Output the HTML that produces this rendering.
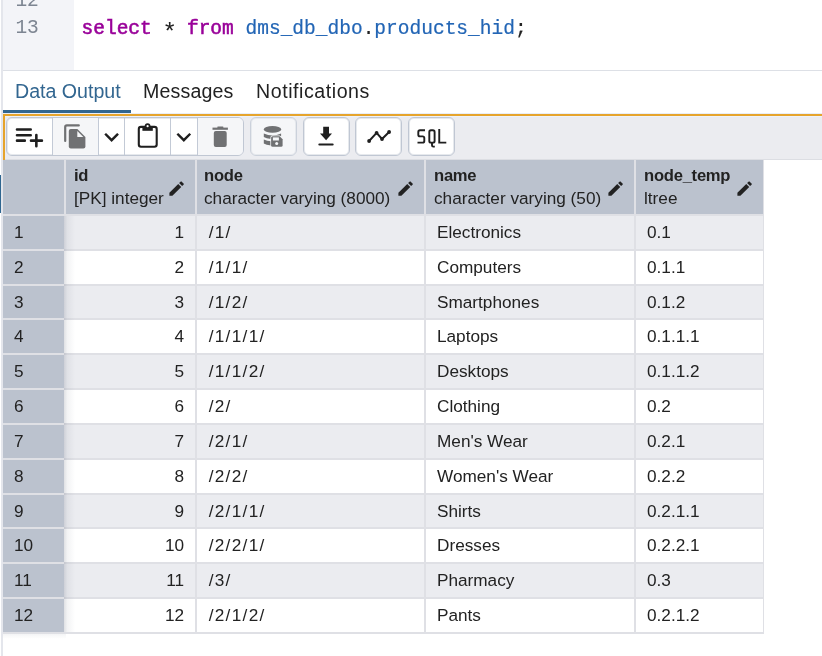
<!DOCTYPE html>
<html><head><meta charset="utf-8">
<style>
*{box-sizing:border-box;margin:0;padding:0}
html,body{width:822px;height:656px;overflow:hidden;background:#fff;font-family:"Liberation Sans",sans-serif;color:#222}
.a{position:absolute}
.ln{font-family:"Liberation Mono",monospace;font-size:19.5px;color:#7d8592;left:15.4px;line-height:27px;white-space:pre}
.code{font-family:"Liberation Mono",monospace;font-size:19.53px;left:81.5px;top:15.5px;line-height:27px;white-space:pre;color:#222;-webkit-text-stroke:0.2px}
.ast{display:inline-block;width:11.72px;font-size:24px;line-height:10px;position:relative;top:6.5px;left:-1.1px;-webkit-text-stroke:0.1px}
.kw{color:#990099;-webkit-text-stroke:0.55px}
.idf{color:#2265b5}
.tab{top:80px;font-size:19.6px;line-height:22px;white-space:pre}
.btn{position:absolute;top:117px;height:39px;border:1px solid #c3cad6;background:#fff}
.dis{background:#f4f5f8}
.t{position:absolute;font-size:17.2px;line-height:20px;white-space:pre;color:#222}
.b{font-weight:bold;font-size:16.6px;letter-spacing:-0.25px}
</style></head><body>
<div style="position:absolute;left:0;top:0;width:822px;height:656px;will-change:transform">
<div class="a" style="left:1px;top:0;width:2px;height:656px;background:#e4e6ec"></div>
<div class="a" style="left:0;top:175px;width:1px;height:38px;background:#2f6690"></div>
<div class="a" style="left:3px;top:0;width:71px;height:70px;background:#f3f4f8"></div>
<div class="a ln" style="top:-12.5px">12</div>
<div class="a ln" style="top:14.5px">13</div>
<div class="a code"><span class="kw">select</span> <span class="ast">*</span> <span class="kw">from</span> <span class="idf">dms_db_dbo</span>.<span class="idf">products_hid</span>;</div>
<div class="a" style="left:3px;top:70px;width:819px;height:1px;background:#dde0e6"></div>
<div class="a tab" style="left:15px;color:#326690">Data Output</div>
<div class="a tab" style="left:143px;letter-spacing:0.15px">Messages</div>
<div class="a tab" style="left:256px;letter-spacing:0.55px">Notifications</div>
<div class="a" style="left:3px;top:110px;width:128px;height:3px;background:#326690"></div>
<div class="a" style="left:3px;top:113px;width:819px;height:1px;background:#e9eef7"></div>
<div class="a" style="left:3px;top:114px;width:819px;height:46px;background:#ebecf0;border-top:2px solid #e6a42c;border-left:2px solid #e6a42c"></div>
<div class="a" style="left:5px;top:116px;width:817px;height:1px;background:#eef2f9"></div>
<div class="a" style="left:5px;top:159px;width:817px;height:1px;background:#dcdee3"></div>
<div class="a" style="left:6px;top:117px;width:238px;height:39px;border:1px solid #c0c7d3;border-radius:6px;background:#fff;overflow:hidden;box-shadow:inset 0 0 0 1px rgba(192,199,211,0.4)"><div class="a" style="left:46px;top:0;width:45px;height:37px;background:#f5f6f8"></div><div class="a" style="left:191px;top:0;width:46px;height:37px;background:#f5f6f8"></div><div class="a" style="left:45px;top:0;width:1px;height:37px;background:#c3cad6"></div><div class="a" style="left:91px;top:0;width:1px;height:37px;background:#c3cad6"></div><div class="a" style="left:117px;top:0;width:1px;height:37px;background:#c3cad6"></div><div class="a" style="left:163px;top:0;width:1px;height:37px;background:#c3cad6"></div><div class="a" style="left:190px;top:0;width:1px;height:37px;background:#c3cad6"></div></div>
<div class="a" style="left:250px;top:117px;width:47px;height:39px;border:1px solid #cbd1db;border-radius:6px;background:#f5f6f8;box-shadow:inset 0 0 0 1px rgba(203,209,219,0.35)"></div>
<div class="a" style="left:303px;top:117px;width:47px;height:39px;border:1px solid #c0c7d3;border-radius:6px;background:#fff;box-shadow:inset 0 0 0 1px rgba(192,199,211,0.4)"></div>
<div class="a" style="left:355px;top:117px;width:47px;height:39px;border:1px solid #c0c7d3;border-radius:6px;background:#fff;box-shadow:inset 0 0 0 1px rgba(192,199,211,0.4)"></div>
<div class="a" style="left:408px;top:117px;width:47px;height:39px;border:1px solid #c0c7d3;border-radius:6px;background:#fff;box-shadow:inset 0 0 0 1px rgba(192,199,211,0.4)"></div>
<svg class="a" style="left:0;top:0" width="822" height="656" viewBox="0 0 822 656">
<g stroke="#1f1f1f" stroke-width="2.6" stroke-linecap="round" fill="none">
<path d="M17 129.5H30.7M17 135.2H30.7M17 140.65H24.8M31 140.65H41.9M36.35 135.1V146.3"/>
</g>
<path d="M65.2 141V127Q65.2 125.4 66.8 125.4H78.8" stroke="#707173" stroke-width="2.2" stroke-linecap="round" fill="none"/>
<path d="M70.8 128.9H77.4L85.4 136.9V146.6Q85.4 148.6 83.4 148.6H70.8Q68.8 148.6 68.8 146.6V130.9Q68.8 128.9 70.8 128.9Z" fill="#707173"/>
<path d="M77.3 131.1V137.1H83.3Z" fill="#f5f6f8"/>
<path d="M106 134.6L111.6 140.2L117.2 134.6M178.2 134.6L183.8 140.2L189.4 134.6" stroke="#1f1f1f" stroke-width="2.4" fill="none" stroke-linecap="square"/>
<rect x="138.8" y="126.9" width="17.9" height="19.8" rx="2.2" stroke="#1f1f1f" stroke-width="2.1" fill="none"/>
<rect x="142.4" y="126.5" width="10.4" height="4.3" fill="#1f1f1f"/>
<circle cx="147.6" cy="126.1" r="2.9" fill="#1f1f1f"/>
<circle cx="147.6" cy="126.2" r="1.1" fill="#fff"/>
<rect x="212.5" y="127.6" width="15.4" height="2.2" fill="#707173"/>
<rect x="217.2" y="126.5" width="6.3" height="1.6" rx="0.8" fill="#707173"/>
<rect x="213.8" y="131" width="12.9" height="16.1" rx="2" fill="#707173"/>
<ellipse cx="272.5" cy="129.4" rx="8.7" ry="3.3" fill="#707173"/>
<path d="M263.8 133.6Q272.5 137.4 281.1 133.6V136.3H271.1V138.9Q266 138.5 263.8 137Z" fill="#707173"/>
<path d="M263.8 139.6Q267 141 271.1 141.3V145.6Q266 145.2 263.8 143.6Z" fill="#707173"/>
<path d="M272.6 136.3H279.6L282.6 139.3V145.3Q282.6 146.8 281.1 146.8H272.6Q271.1 146.8 271.1 145.3V137.8Q271.1 136.3 272.6 136.3Z" fill="#707173" stroke="#f5f6f8" stroke-width="1.5" paint-order="stroke"/>
<rect x="272.9" y="137.4" width="6" height="3.1" fill="#f5f6f8"/>
<circle cx="276.7" cy="143.6" r="1.5" fill="#f5f6f8"/>
<path d="M323.2 126.8H329V133.4H332L326.1 140.2L320 133.4H323.2Z" fill="#1f1f1f"/>
<path d="M319.4 144.5H332.6" stroke="#1f1f1f" stroke-width="2.2" stroke-linecap="round"/>
<path d="M369.1 141L376.6 132.9L382 139L389.1 132" stroke="#1f1f1f" stroke-width="2" fill="none"/>
<circle cx="369.1" cy="141" r="1.9" fill="#1f1f1f"/><circle cx="376.6" cy="132.9" r="1.9" fill="#1f1f1f"/><circle cx="382" cy="139" r="1.9" fill="#1f1f1f"/><circle cx="389.1" cy="132" r="1.9" fill="#1f1f1f"/>
<g stroke="#1f1f1f" stroke-width="1.9" fill="none">
<path d="M425 130.2H420Q418.3 130.2 418.3 132V134.7Q418.3 136.4 420 136.4H422.6Q424.3 136.4 424.3 138.1V140.9Q424.3 142.6 422.6 142.6H417.5"/>
<path d="M431 130.2H432.9Q434.6 130.2 434.6 132V140.9Q434.6 142.6 432.9 142.6H431Q429.3 142.6 429.3 140.9V132Q429.3 130.2 431 130.2Z"/>
<path d="M432 142.6V145.3Q432 146.6 433.3 146.6H434.8"/>
<path d="M439.25 129.1V142.6H446.3"/>
</g>
</svg>
<div class="a" style="left:3px;top:160px;width:760px;height:54px;background:#bbc2ce"></div>
<div class="a" style="left:3px;top:214px;width:760px;height:2px;background:#dfe0e5"></div>
<div class="a" style="left:64px;top:216px;width:699px;height:33px;background:#ebecf0"></div>
<div class="a" style="left:3px;top:216px;width:61px;height:33px;background:#bbc2ce"></div>
<div class="t" style="left:14px;top:222.0px">1</div>
<div class="t" style="right:638px;top:222.0px">1</div>
<div class="t" style="left:208.7px;top:222.0px;letter-spacing:1.3px">/1/</div>
<div class="t" style="left:437px;top:222.0px">Electronics</div>
<div class="t" style="left:647px;top:222.0px">0.1</div>
<div class="a" style="left:3px;top:249px;width:760px;height:2px;background:#dfe0e5"></div>
<div class="a" style="left:64px;top:251px;width:699px;height:33px;background:#fff"></div>
<div class="a" style="left:3px;top:251px;width:61px;height:33px;background:#bbc2ce"></div>
<div class="t" style="left:14px;top:257.0px">2</div>
<div class="t" style="right:638px;top:257.0px">2</div>
<div class="t" style="left:208.7px;top:257.0px;letter-spacing:1.3px">/1/1/</div>
<div class="t" style="left:437px;top:257.0px">Computers</div>
<div class="t" style="left:647px;top:257.0px">0.1.1</div>
<div class="a" style="left:3px;top:284px;width:760px;height:2px;background:#dfe0e5"></div>
<div class="a" style="left:64px;top:286px;width:699px;height:32px;background:#ebecf0"></div>
<div class="a" style="left:3px;top:286px;width:61px;height:32px;background:#bbc2ce"></div>
<div class="t" style="left:14px;top:291.5px">3</div>
<div class="t" style="right:638px;top:291.5px">3</div>
<div class="t" style="left:208.7px;top:291.5px;letter-spacing:1.3px">/1/2/</div>
<div class="t" style="left:437px;top:291.5px">Smartphones</div>
<div class="t" style="left:647px;top:291.5px">0.1.2</div>
<div class="a" style="left:3px;top:318px;width:760px;height:2px;background:#dfe0e5"></div>
<div class="a" style="left:64px;top:320px;width:699px;height:33px;background:#fff"></div>
<div class="a" style="left:3px;top:320px;width:61px;height:33px;background:#bbc2ce"></div>
<div class="t" style="left:14px;top:326.0px">4</div>
<div class="t" style="right:638px;top:326.0px">4</div>
<div class="t" style="left:208.7px;top:326.0px;letter-spacing:1.3px">/1/1/1/</div>
<div class="t" style="left:437px;top:326.0px">Laptops</div>
<div class="t" style="left:647px;top:326.0px">0.1.1.1</div>
<div class="a" style="left:3px;top:353px;width:760px;height:2px;background:#dfe0e5"></div>
<div class="a" style="left:64px;top:355px;width:699px;height:33px;background:#ebecf0"></div>
<div class="a" style="left:3px;top:355px;width:61px;height:33px;background:#bbc2ce"></div>
<div class="t" style="left:14px;top:361.0px">5</div>
<div class="t" style="right:638px;top:361.0px">5</div>
<div class="t" style="left:208.7px;top:361.0px;letter-spacing:1.3px">/1/1/2/</div>
<div class="t" style="left:437px;top:361.0px">Desktops</div>
<div class="t" style="left:647px;top:361.0px">0.1.1.2</div>
<div class="a" style="left:3px;top:388px;width:760px;height:2px;background:#dfe0e5"></div>
<div class="a" style="left:64px;top:390px;width:699px;height:33px;background:#fff"></div>
<div class="a" style="left:3px;top:390px;width:61px;height:33px;background:#bbc2ce"></div>
<div class="t" style="left:14px;top:396.0px">6</div>
<div class="t" style="right:638px;top:396.0px">6</div>
<div class="t" style="left:208.7px;top:396.0px;letter-spacing:1.3px">/2/</div>
<div class="t" style="left:437px;top:396.0px">Clothing</div>
<div class="t" style="left:647px;top:396.0px">0.2</div>
<div class="a" style="left:3px;top:423px;width:760px;height:2px;background:#dfe0e5"></div>
<div class="a" style="left:64px;top:425px;width:699px;height:33px;background:#ebecf0"></div>
<div class="a" style="left:3px;top:425px;width:61px;height:33px;background:#bbc2ce"></div>
<div class="t" style="left:14px;top:431.0px">7</div>
<div class="t" style="right:638px;top:431.0px">7</div>
<div class="t" style="left:208.7px;top:431.0px;letter-spacing:1.3px">/2/1/</div>
<div class="t" style="left:437px;top:431.0px">Men's Wear</div>
<div class="t" style="left:647px;top:431.0px">0.2.1</div>
<div class="a" style="left:3px;top:458px;width:760px;height:2px;background:#dfe0e5"></div>
<div class="a" style="left:64px;top:460px;width:699px;height:33px;background:#fff"></div>
<div class="a" style="left:3px;top:460px;width:61px;height:33px;background:#bbc2ce"></div>
<div class="t" style="left:14px;top:466.0px">8</div>
<div class="t" style="right:638px;top:466.0px">8</div>
<div class="t" style="left:208.7px;top:466.0px;letter-spacing:1.3px">/2/2/</div>
<div class="t" style="left:437px;top:466.0px">Women's Wear</div>
<div class="t" style="left:647px;top:466.0px">0.2.2</div>
<div class="a" style="left:3px;top:493px;width:760px;height:2px;background:#dfe0e5"></div>
<div class="a" style="left:64px;top:495px;width:699px;height:32px;background:#ebecf0"></div>
<div class="a" style="left:3px;top:495px;width:61px;height:32px;background:#bbc2ce"></div>
<div class="t" style="left:14px;top:500.5px">9</div>
<div class="t" style="right:638px;top:500.5px">9</div>
<div class="t" style="left:208.7px;top:500.5px;letter-spacing:1.3px">/2/1/1/</div>
<div class="t" style="left:437px;top:500.5px">Shirts</div>
<div class="t" style="left:647px;top:500.5px">0.2.1.1</div>
<div class="a" style="left:3px;top:527px;width:760px;height:2px;background:#dfe0e5"></div>
<div class="a" style="left:64px;top:529px;width:699px;height:33px;background:#fff"></div>
<div class="a" style="left:3px;top:529px;width:61px;height:33px;background:#bbc2ce"></div>
<div class="t" style="left:14px;top:535.0px">10</div>
<div class="t" style="right:638px;top:535.0px">10</div>
<div class="t" style="left:208.7px;top:535.0px;letter-spacing:1.3px">/2/2/1/</div>
<div class="t" style="left:437px;top:535.0px">Dresses</div>
<div class="t" style="left:647px;top:535.0px">0.2.2.1</div>
<div class="a" style="left:3px;top:562px;width:760px;height:2px;background:#dfe0e5"></div>
<div class="a" style="left:64px;top:564px;width:699px;height:33px;background:#ebecf0"></div>
<div class="a" style="left:3px;top:564px;width:61px;height:33px;background:#bbc2ce"></div>
<div class="t" style="left:14px;top:570.0px">11</div>
<div class="t" style="right:638px;top:570.0px">11</div>
<div class="t" style="left:208.7px;top:570.0px;letter-spacing:1.3px">/3/</div>
<div class="t" style="left:437px;top:570.0px">Pharmacy</div>
<div class="t" style="left:647px;top:570.0px">0.3</div>
<div class="a" style="left:3px;top:597px;width:760px;height:2px;background:#dfe0e5"></div>
<div class="a" style="left:64px;top:599px;width:699px;height:33px;background:#fff"></div>
<div class="a" style="left:3px;top:599px;width:61px;height:33px;background:#bbc2ce"></div>
<div class="t" style="left:14px;top:605.0px">12</div>
<div class="t" style="right:638px;top:605.0px">12</div>
<div class="t" style="left:208.7px;top:605.0px;letter-spacing:1.3px">/2/1/2/</div>
<div class="t" style="left:437px;top:605.0px">Pants</div>
<div class="t" style="left:647px;top:605.0px">0.2.1.2</div>
<div class="a" style="left:3px;top:632px;width:760px;height:2px;background:#dfe0e5"></div>
<div class="a" style="left:195px;top:160px;width:2px;height:472px;background:#dfe0e5"></div>
<div class="a" style="left:424px;top:160px;width:2px;height:472px;background:#dfe0e5"></div>
<div class="a" style="left:634px;top:160px;width:2px;height:472px;background:#dfe0e5"></div>
<div class="a" style="left:64px;top:160px;width:2px;height:56px;background:#dfe0e5"></div>
<div class="a" style="left:64px;top:216px;width:11px;height:416px;background:linear-gradient(to right,rgba(40,50,75,0.15),rgba(40,50,75,0.06) 30%,rgba(40,50,75,0))"></div>
<div class="a" style="left:3px;top:634px;width:63px;height:5px;background:linear-gradient(to bottom,rgba(40,50,75,0.05),rgba(40,50,75,0))"></div>
<div class="a" style="left:763px;top:160px;width:1px;height:474px;background:#dfe0e5"></div>
<div class="t b" style="left:74px;top:166px">id</div>
<div class="t" style="left:74px;top:188.3px">[PK] integer</div>
<svg class="a" style="left:167.4px;top:179.1px" width="19.2" height="19.2" viewBox="0 0 24 24"><path fill="#222" d="M3 17.25V21h3.75L17.81 9.94l-3.75-3.75L3 17.25zM20.71 7.04a1 1 0 0 0 0-1.41l-2.34-2.34a1 1 0 0 0-1.41 0l-1.83 1.83 3.75 3.75 1.83-1.83z"/></svg>
<div class="t b" style="left:204px;top:166px">node</div>
<div class="t" style="left:204px;top:188.3px">character varying (8000)</div>
<svg class="a" style="left:396.4px;top:179.1px" width="19.2" height="19.2" viewBox="0 0 24 24"><path fill="#222" d="M3 17.25V21h3.75L17.81 9.94l-3.75-3.75L3 17.25zM20.71 7.04a1 1 0 0 0 0-1.41l-2.34-2.34a1 1 0 0 0-1.41 0l-1.83 1.83 3.75 3.75 1.83-1.83z"/></svg>
<div class="t b" style="left:434px;top:166px">name</div>
<div class="t" style="left:434px;top:188.3px">character varying (50)</div>
<svg class="a" style="left:606px;top:179.1px" width="19.2" height="19.2" viewBox="0 0 24 24"><path fill="#222" d="M3 17.25V21h3.75L17.81 9.94l-3.75-3.75L3 17.25zM20.71 7.04a1 1 0 0 0 0-1.41l-2.34-2.34a1 1 0 0 0-1.41 0l-1.83 1.83 3.75 3.75 1.83-1.83z"/></svg>
<div class="t b" style="left:644px;top:166px">node_temp</div>
<div class="t" style="left:644px;top:188.3px">ltree</div>
<svg class="a" style="left:734.75px;top:179.1px" width="19.2" height="19.2" viewBox="0 0 24 24"><path fill="#222" d="M3 17.25V21h3.75L17.81 9.94l-3.75-3.75L3 17.25zM20.71 7.04a1 1 0 0 0 0-1.41l-2.34-2.34a1 1 0 0 0-1.41 0l-1.83 1.83 3.75 3.75 1.83-1.83z"/></svg>
</div>
</body></html>
